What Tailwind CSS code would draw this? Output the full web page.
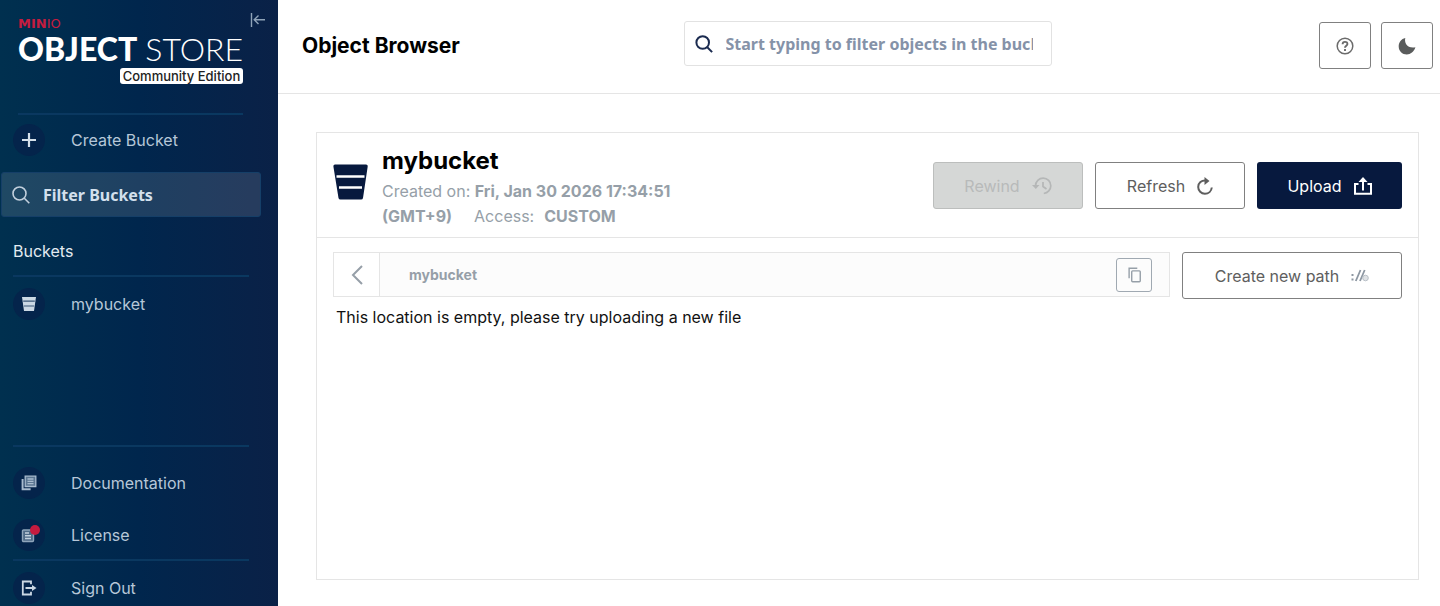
<!DOCTYPE html>
<html lang="en">
<head>
  <meta charset="UTF-8" />
  <title>Object Browser - MinIO</title>
  <meta name="viewport" content="width=device-width, initial-scale=1.0" />
  <script src="https://cdn.jsdelivr.net/npm/@tailwindcss/browser@4"></script>
</head>
<body class="flex h-screen overflow-hidden bg-white font-['Inter',sans-serif] text-base text-black">
  <!-- Sidebar -->
  <aside class="flex w-[278px] shrink-0 flex-col bg-linear-to-r from-[#00304f] via-[#00264d] to-[#0a2147] text-[#b6c7d8]">
    <div class="relative mr-[35px] ml-[18px] h-[115px] shrink-0 border-b-2 border-[#0a3860] pt-[17px]">
      <div class="font-['DejaVu_Sans',sans-serif] text-[13px] leading-[14px] text-[#c51c3f]"><span class="font-bold">MIN</span><span class="font-normal">IO</span></div>
      <div class="flex justify-between font-['Lato',sans-serif] text-[32px] leading-[36px] whitespace-nowrap text-white">
        <span class="font-black">OBJECT</span><span class="font-light">STORE</span>
      </div>
      <div class="mt-px ml-auto w-[123px] rounded-[3px] bg-white text-center text-[13px] leading-[16px] font-medium whitespace-nowrap text-[#222]">Community Edition</div>
      <button type="button" aria-label="Collapse menu" class="absolute top-[12px] -right-[23px]">
        <svg class="h-[16px] w-[16px]" viewBox="0 0 16 16" fill="none" stroke="#8fa3b8" stroke-width="1.4"><path d="M1.5 1v14M15 7.7H4M8.5 3.5 4.2 7.7l4.3 4.3" /></svg>
      </button>
    </div>

    <a href="#" class="mt-[9px] ml-[13px] flex h-[32px] shrink-0 items-center gap-[26px]">
      <span class="flex size-8 items-center justify-center rounded-full bg-[#04244b]">
        <svg class="size-4" viewBox="0 0 16 16" stroke="#d5e0ea" stroke-width="2.2"><path d="M8 1v14M1 8h14" /></svg>
      </span>
      Create Bucket
    </a>

    <div class="mt-[16px] mr-[17px] ml-px flex h-[45px] shrink-0 items-center rounded-[3px] border border-[#153f68] bg-white/12 pl-[10px]">
      <svg class="size-[18px] shrink-0" viewBox="0 0 18 18" fill="none" stroke="#c2d0dd" stroke-width="1.6"><circle cx="7.5" cy="7.5" r="6.5" /><path d="m12.3 12.3 5 5" /></svg>
      <input type="text" aria-label="Filter Buckets" placeholder="Filter Buckets" class="ml-[13px] min-w-0 flex-1 font-['Noto_Sans',sans-serif] text-[16px] font-bold text-white outline-none placeholder:text-[#d3e0ed]" />
    </div>

    <div class="mr-[29px] ml-[13px] flex h-[60px] shrink-0 flex-col justify-center border-b-2 border-[#0a3860] pt-[9px] text-[#e3ebf2]">Buckets</div>
    <a href="#" class="mt-[11px] ml-[13px] flex h-[32px] shrink-0 items-center gap-[26px]">
      <span class="flex size-8 items-center justify-center rounded-full bg-[#04244b]">
        <svg class="size-4" viewBox="0 0 16 16"><path fill="#cbd8e4" d="M1 1h14l-2 14H3z" /><path stroke="#3b5676" stroke-width="1.2" d="M2.2 5.2h11.6M3 10h10" /></svg>
      </span>
      mybucket
    </a>

    <!-- Bottom links -->
    <div class="mt-auto mr-[29px] ml-[13px] shrink-0 border-t-2 border-[#0a3860] pt-[20px]">
      <a href="#" class="flex h-[32px] items-center gap-[26px]">
        <span class="flex size-8 items-center justify-center rounded-full bg-[#04244b]">
          <svg class="size-4" viewBox="0 0 16 16" fill="none" stroke="#a8bbce" stroke-width="1.3"><path fill="#5b7692" d="M4.2 1.2h10.6v10.3H4.2z" /><path d="M6.5 4h6M6.5 6.3h6M6.5 8.6h6" /><path stroke-width="2" d="M1.6 4v10.3h8" /></svg>
        </span>
        Documentation
      </a>
      <a href="#" class="mt-[20px] flex h-[32px] items-center gap-[26px]">
        <span class="relative flex size-8 items-center justify-center rounded-full bg-[#04244b]">
          <svg class="size-4" viewBox="0 0 16 16" fill="none" stroke="#8fa5bb" stroke-width="1.4"><rect x="1.5" y="3" width="11" height="11.5" rx="1" fill="#4e6a87" /><path stroke="#c2d0dd" d="M4 6h4M4 8.7h6M4 11.5h6" /></svg>
          <span class="absolute top-[6px] right-[5px] size-[10px] rounded-full bg-[#c51b3f]"></span>
        </span>
        License
      </a>
    </div>
    <div class="mt-[8px] mr-[29px] ml-[13px] shrink-0 border-t-2 border-[#0a3860] pt-[11px] pb-[2px]">
      <a href="#" class="flex h-[32px] items-center gap-[26px]">
        <span class="flex size-8 items-center justify-center rounded-full bg-[#04244b]">
          <svg class="size-4" viewBox="0 0 16 16" fill="none" stroke="#cbd8e4" stroke-width="1.8"><path d="M10 4.300V1.500H1.800v13H10v-2.800M4.500 8h8" /><path fill="#cbd8e4" stroke="none" d="m11 5 4.500 3-4.500 3z" /></svg>
        </span>
        Sign Out
      </a>
    </div>
  </aside>

  <main class="flex min-w-0 flex-1 flex-col">
    <header class="grid h-[94px] shrink-0 grid-cols-[1fr_368px_1fr] border-b border-[#e5e5e5] pr-[7px] pl-[24px]">
      <h1 class="mt-[33px] text-[21px] leading-[26px] font-bold">Object Browser</h1>
      <div class="mt-[21px] flex h-[45px] items-center rounded-[3px] border border-[#e2e2e2] pr-[18px] pl-[10px]">
        <svg class="size-[18px] shrink-0" viewBox="0 0 18 18" fill="none" stroke="#1b2b50" stroke-width="2"><circle cx="7.7" cy="7.5" r="6.3" /><path d="m12.3 12.3 4.8 4.8" /></svg>
        <input type="text" aria-label="Filter objects" placeholder="Start typing to filter objects in the bucket" class="ml-[13px] min-w-0 flex-1 font-['Noto_Sans',sans-serif] text-[16px] font-bold outline-none placeholder:text-[#8592a8]" />
      </div>
      <div class="mt-[22px] flex justify-end gap-[10px]">
        <button type="button" aria-label="Help" class="flex h-[47px] w-[52px] items-center justify-center rounded-[3px] border border-[#808080]">
          <svg class="size-[18px]" viewBox="0 0 18 18" fill="none" stroke="#6b6b6b"><circle cx="9" cy="9" r="7.8" stroke-width="1.5" /><path stroke-width="1.9" d="M6.6 7.200c0-3.200 4.800-3 4.800-.3C11.400 8.700 9 8.600 9 10.700M9 12v2" /></svg>
        </button>
        <button type="button" aria-label="Dark mode" class="flex h-[47px] w-[52px] items-center justify-center rounded-[3px] border border-[#808080]">
          <svg class="size-[18px]" viewBox="0 0 18 18"><path fill="#5a5c5c" d="M7.3 1C6 6 9.5 11.8 17.4 10.3 16 15 12.5 17.4 8.8 17.4 4.3 17.4.7 13.9.7 9.4.7 5.5 3.3 1.8 7.3 1z" /></svg>
        </button>
      </div>
    </header>

    <section class="mt-[38px] mr-[21px] mb-[26px] ml-[38px] flex flex-1 flex-col border border-[#e5e5e5]">
      <div class="flex h-[105px] shrink-0 border-b border-[#e5e5e5] px-4">
        <svg class="mt-[31px] h-[36px] w-[35px] shrink-0" viewBox="0 0 35 36"><path fill="#07193e" d="M2 .5h31q2 0 1.7 2L30 34q-.3 1.5-2 1.500H7.500q-1.700 0-2-1.500L.4 2.500Q.2.5 2 .5z" /><path stroke="#fff" stroke-width="2.6" d="M3.5 12.5h28M6 23.500h23" /></svg>
        <div class="mt-[13px] ml-[14px] w-[310px]">
          <h2 class="mb-[3px] text-[24px] leading-[30px] font-bold">mybucket</h2>
          <p class="leading-[25px] text-[#969fa8]">Created on: <strong>Fri, Jan 30 2026 17:34:51</strong> <strong>(GMT+9)</strong><span class="ml-[22px]">Access:</span><strong class="ml-[10px]">CUSTOM</strong></p>
        </div>
        <div class="mt-[29px] ml-auto flex gap-[12px]">
          <button type="button" disabled class="flex h-[47px] w-[150px] items-center justify-center gap-[12px] rounded-[3px] border border-[#bcbebd] bg-[#d5d7d6] text-[#b8baba]">
            Rewind
            <svg class="h-[18px] w-[20px]" viewBox="0 0 20 18" fill="none" stroke="#b5b7b7" stroke-width="1.7"><path d="M3.5 9C3.5 4.5 7 1.2 11.2 1.2c4.3 0 7.6 3.5 7.6 7.5s-3 7.3-7 7.8M11 5v4.5l3.5 2.5" /><path fill="#b5b7b7" stroke="none" d="M0 8h7.5l-3.7 4z" /></svg>
          </button>
          <button type="button" class="flex h-[47px] w-[150px] items-center justify-center gap-[12px] rounded-[3px] border border-[#808080] text-[#5e5e5e]">
            Refresh
            <svg class="h-[18px] w-[16px]" viewBox="0 0 16 18" fill="none" stroke="#5e5e5e" stroke-width="2"><path d="M9 3.5C4.5 3 1.2 6 1.2 10c0 3.7 3 6.7 6.7 6.7 3.6 0 6.500-2.700 6.900-6.200" /><path fill="#5e5e5e" stroke="none" d="M7.5 0 12.5 4l-5 4z" /></svg>
          </button>
          <button type="button" class="flex h-[47px] w-[145px] items-center justify-center gap-[12px] rounded-[3px] bg-[#07193e] text-white">
            Upload
            <svg class="size-[18px]" viewBox="0 0 18 18" fill="none" stroke="#fff" stroke-width="2"><path d="M4.5 7H1v9.800h16V7h-3.500M9 3v10.500" /><path fill="#fff" stroke="none" d="M4.500 5 9 0l4.500 5z" /></svg>
          </button>
        </div>
      </div>

      <div class="mt-[14px] flex px-4">
        <div class="flex h-[45px] flex-1 border border-[#e5e5e5] bg-[#fcfcfc]">
          <button type="button" aria-label="Back" class="flex w-[46px] items-center justify-center border-r border-[#e5e5e5] bg-white">
            <svg class="h-[20px] w-[12px]" viewBox="0 0 12 20" fill="none" stroke="#969fa8" stroke-width="2"><path d="M11 1 2 10l9 9" /></svg>
          </button>
          <a href="#" class="ml-[29px] self-center text-[14px] font-bold text-[#969fa8]">mybucket</a>
          <button type="button" aria-label="Copy path" class="mr-[17px] ml-auto flex h-[34px] w-[36px] items-center justify-center self-center rounded-[3px] border border-[#a0a9b2]">
            <svg class="h-[16px] w-[13px]" viewBox="0 0 14 17" fill="none" stroke="#969fa8" stroke-width="1.5"><path d="M1.2 12V1.2H10" /><rect x="4" y="4" width="9.2" height="11.8" rx="1" /></svg>
          </button>
        </div>
        <button type="button" class="ml-[12px] flex h-[47px] w-[220px] items-center justify-center gap-[12px] rounded-[3px] border border-[#808080] text-[#5e5e5e]">
          Create new path
          <svg class="h-[13px] w-[18px]" viewBox="0 0 18 13" fill="none" stroke="#8d97a2"><path stroke-width="1.8" d="M4.800 12 9.500 1M9 12 13.700 1" /><path stroke-width="2" d="M.5 6h2M.5 10.500h2" /><circle cx="14.500" cy="9" r="2.800" fill="#dfe2e5" stroke="#b9c0c7" /></svg>
        </button>
      </div>
      <p class="mt-[6px] ml-[19px] leading-[24px] text-[#111]">This location is empty, please try uploading a new file</p>
    </section>
  </main>
</body>
</html>
